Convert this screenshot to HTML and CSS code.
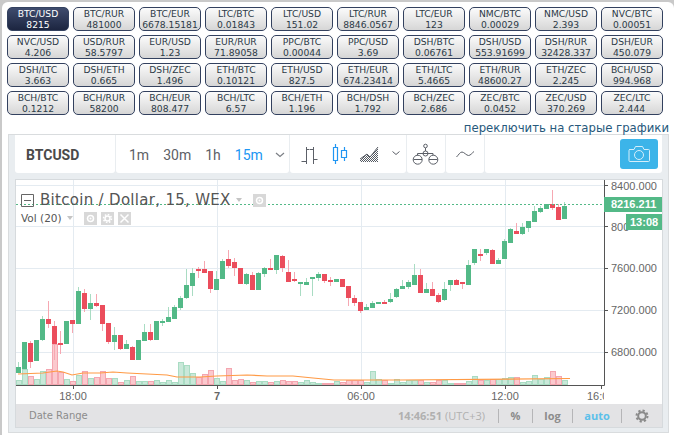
FILE: index.html
```html
<!DOCTYPE html>
<html lang="ru">
<head>
  <meta charset="UTF-8">
  <title>BTCUSD</title>
  <link rel="stylesheet" href="styles.css">
  <script src="chart.js" defer></script>
</head>
<body>
  <div class="page">
    <div class="pairs" id="pairs">
      <a class="pair active"><span>BTC/USD</span><span>8215</span></a>
      <a class="pair"><span>BTC/RUR</span><span>481000</span></a>
      <a class="pair"><span>BTC/EUR</span><span>6678.15181</span></a>
      <a class="pair"><span>LTC/BTC</span><span>0.01843</span></a>
      <a class="pair"><span>LTC/USD</span><span>151.02</span></a>
      <a class="pair"><span>LTC/RUR</span><span>8846.0567</span></a>
      <a class="pair"><span>LTC/EUR</span><span>123</span></a>
      <a class="pair"><span>NMC/BTC</span><span>0.00029</span></a>
      <a class="pair"><span>NMC/USD</span><span>2.393</span></a>
      <a class="pair"><span>NVC/BTC</span><span>0.00051</span></a>
      <a class="pair"><span>NVC/USD</span><span>4.206</span></a>
      <a class="pair"><span>USD/RUR</span><span>58.5797</span></a>
      <a class="pair"><span>EUR/USD</span><span>1.23</span></a>
      <a class="pair"><span>EUR/RUR</span><span>71.89058</span></a>
      <a class="pair"><span>PPC/BTC</span><span>0.00044</span></a>
      <a class="pair"><span>PPC/USD</span><span>3.69</span></a>
      <a class="pair"><span>DSH/BTC</span><span>0.06761</span></a>
      <a class="pair"><span>DSH/USD</span><span>553.91699</span></a>
      <a class="pair"><span>DSH/RUR</span><span>32428.337</span></a>
      <a class="pair"><span>DSH/EUR</span><span>450.079</span></a>
      <a class="pair"><span>DSH/LTC</span><span>3.663</span></a>
      <a class="pair"><span>DSH/ETH</span><span>0.665</span></a>
      <a class="pair"><span>DSH/ZEC</span><span>1.496</span></a>
      <a class="pair"><span>ETH/BTC</span><span>0.10121</span></a>
      <a class="pair"><span>ETH/USD</span><span>827.5</span></a>
      <a class="pair"><span>ETH/EUR</span><span>674.23414</span></a>
      <a class="pair"><span>ETH/LTC</span><span>5.4665</span></a>
      <a class="pair"><span>ETH/RUR</span><span>48600.27</span></a>
      <a class="pair"><span>ETH/ZEC</span><span>2.245</span></a>
      <a class="pair"><span>BCH/USD</span><span>994.968</span></a>
      <a class="pair"><span>BCH/BTC</span><span>0.1212</span></a>
      <a class="pair"><span>BCH/RUR</span><span>58200</span></a>
      <a class="pair"><span>BCH/EUR</span><span>808.477</span></a>
      <a class="pair"><span>BCH/LTC</span><span>6.57</span></a>
      <a class="pair"><span>BCH/ETH</span><span>1.196</span></a>
      <a class="pair"><span>BCH/DSH</span><span>1.792</span></a>
      <a class="pair"><span>BCH/ZEC</span><span>2.686</span></a>
      <a class="pair"><span>ZEC/BTC</span><span>0.0452</span></a>
      <a class="pair"><span>ZEC/USD</span><span>370.269</span></a>
      <a class="pair"><span>ZEC/LTC</span><span>2.444</span></a>
    </div>
    <div class="switch-row"><a class="switch-link">переключить на старые графики</a></div>

    <div class="chart-panel">
      <div class="toolbar">
        <div class="tool-group group-symbol">BTCUSD</div>
        <div class="tool-group group-intervals">
          <span class="interval">1m</span>
          <span class="interval">30m</span>
          <span class="interval">1h</span>
          <span class="interval current">15m</span>
          <svg class="chevron" width="10" height="6" viewBox="0 0 10 6"><path d="M1 1l4 3.5L9 1"/></svg>
        </div>
        <div class="tool-group group-styles">
          <svg width="116" height="38" viewBox="290 135 116 38">
            <defs>
              <pattern id="dots" width="2" height="2" patternUnits="userSpaceOnUse">
                <rect width="1" height="1" fill="#555a62"/>
                <rect x="1" y="1" width="1" height="1" fill="#555a62"/>
              </pattern>
            </defs>
            <path class="ico" d="M301.5 161.5h5.500M306.5 147v17M306.5 149.5h3M313.5 147v17M310 149.5h3.500M313.5 159.5h4"/>
            <path class="ico-blue" d="M335.5 144v3M335.5 160v4M333.5 147.5h4v13h-4zM344.5 147v3M344.5 157v4M341.5 150.5h5v7h-5z"/>
            <path fill="url(#dots)" d="M360 159l7-5 3 3 8-10v15h-18z"/>
            <path class="ico" d="M360 159l7-5 3 3 8-10"/>
            <path class="ico" d="M392.5 151.5l3.500 3 3.500-3"/>
          </svg>
        </div>
        <div class="tool-group group-icon">
          <svg width="38" height="38" viewBox="407 135 38 38">
            <path class="ico" d="M417.5 153.5h15.500M417.500 153.500v2M433 153.500v2M425.500 148v3M413.500 159.500h8.500M429 159.500h8.500"/>
            <circle class="ico" cx="425.5" cy="153.5" r="2.5"/>
            <circle class="ico" cx="425.5" cy="146" r="1.8"/>
            <circle class="ico" cx="417.700" cy="159.700" r="4.500"/>
            <circle class="ico" cx="433.300" cy="159.700" r="4.500"/>
          </svg>
        </div>
        <div class="tool-group group-icon">
          <svg width="38" height="38" viewBox="446 135 38 38">
            <path class="ico" d="M456.5 157c2-2 3.500-5 5.500-5s4.500 3.500 6.500 3.500 3.500-2.500 5.500-4"/>
          </svg>
        </div>
        <div class="tool-group group-camera">
          <span class="camera">
            <svg width="24" height="18" viewBox="0 0 24 18">
              <path d="M2.500 4.500h4.500l1.500-3h7l1.500 3h4.500a1 1 0 0 1 1 1v10a1 1 0 0 1-1 1h-18.500a1 1 0 0 1-1-1v-10a1 1 0 0 1 1-1z"/>
              <circle cx="12" cy="10" r="4.500"/>
            </svg>
          </span>
        </div>
      </div>

      <div class="chart-box">
        <div class="plot">
          <svg class="plot-svg" id="plot" width="646" height="224" viewBox="16 180 646 224"></svg>
          <div class="legend">
            <div class="legend-main">
              <svg class="collapse" width="13" height="13" viewBox="0 0 13 13"><path d="M.5 .5h12v12H.5zM3 6.500h7"/></svg>
              <span class="legend-title">Bitcoin / Dollar, 15, WEX</span>
              <i class="caret"></i>
              <span class="mini-btn first">
                <svg width="13" height="13" viewBox="0 0 13 13"><circle cx="6.500" cy="6.500" r="3"/><circle class="pupil" cx="6.500" cy="6.500" r="1"/></svg>
              </span>
            </div>
            <div class="legend-vol">
              <span class="vol-title">Vol (20)</span>
              <i class="caret"></i>
              <span class="mini-btn first">
                <svg width="13" height="13" viewBox="0 0 13 13"><circle cx="6.500" cy="6.500" r="3"/><circle class="pupil" cx="6.500" cy="6.500" r="1"/></svg>
              </span>
              <span class="mini-btn">
                <svg width="13" height="13" viewBox="0 0 13 13"><circle cx="6.500" cy="6.500" r="2.500"/><circle class="teeth" cx="6.500" cy="6.500" r="4"/></svg>
              </span>
              <span class="mini-btn">
                <svg width="13" height="13" viewBox="0 0 13 13"><path d="M2.500 2.500l8 8M10.500 2.500l-8 8"/></svg>
              </span>
            </div>
          </div>
        </div>
        <div class="status-bar">
          <span class="date-range">Date Range</span>
          <div class="status-right">
            <span class="clock">14:46:51 <span class="utc">(UTC+3)</span></span>
            <span class="status-item item-percent">%</span>
            <span class="status-item item-log">log</span>
            <span class="status-item item-auto">auto</span>
            <span class="status-item item-gear">
              <svg width="14" height="14" viewBox="0 0 14 14"><circle cx="7" cy="7" r="3.800"/><circle class="gear-teeth" cx="7" cy="7" r="5.500"/></svg>
            </span>
          </div>
        </div>
      </div>
    </div>
  </div>
</body>
</html>
```

FILE: styles.css
```css
html, body { margin: 0; padding: 0; }
body {
  height: 435px;
  overflow: hidden;
  background-color: #c9c9c9;
  font-family: "Noto Sans", sans-serif;
}
.page {
  height: 433px;
  margin: 2px 0 0 2px;
  background-color: #ffffff;
  border-radius: 6px 6px 0 0;
}

/* pair buttons */
.pairs {
  display: grid;
  grid-template-columns: repeat(10, 62px);
  grid-auto-rows: 24px;
  gap: 4px;
  padding: 5px 0 0 5px;
}
.pair {
  box-sizing: border-box;
  display: block;
  border: 1px solid #33415f;
  border-radius: 5px;
  background: linear-gradient(#fbfbfb, #d6d6d6);
  color: #2c3a47;
  font-family: "DejaVu Sans", sans-serif;
  font-size: 9.2px;
  line-height: 11px;
  text-align: center;
  white-space: nowrap;
}
.pair span { display: block; height: 11px; }
.pair.active {
  background: linear-gradient(#3f4c6e, #1c2540);
  color: #ffffff;
}
.switch-row {
  height: 19px;
  padding-right: 5px;
  text-align: right;
}
.switch-link {
  color: #27597c;
  font-family: "DejaVu Sans", sans-serif;
  font-size: 11.7px;
  line-height: 17px;
  white-space: nowrap;
}

/* chart panel */
.chart-panel {
  box-sizing: border-box;
  width: 661px;
  height: 299px;
  margin-left: 6px;
  border: 1px solid #d9dcde;
  background-color: #e9edf0;
  padding: 0 7px 0 6px;
}
.toolbar {
  display: flex;
  gap: 1px;
  height: 38px;
  margin-right: -1px;
}
.tool-group {
  display: flex;
  align-items: center;
  background-color: #ffffff;
  border-radius: 0 0 3px 3px;
}
.group-symbol {
  width: 89px;
  padding: 2px 0 0 11px;
  height: 36px;
  color: #4a4a4a;
  font-family: Roboto, sans-serif;
  font-size: 14px;
  font-weight: 700;
}
.group-intervals {
  width: 160px;
  height: 36px;
  padding: 2px 0 0 13px;
  gap: 14px;
  color: #5d6166;
  font-family: Roboto, sans-serif;
  font-size: 14px;
}
.interval.current { color: #2196f3; }
.chevron { margin-left: -2px; }
.chevron path { fill: none; stroke: #7b7f85; stroke-width: 1.2; }
.group-styles { width: 116px; }
.group-icon { width: 38px; }
.group-camera {
  flex: 1;
  justify-content: flex-end;
  padding-right: 4px;
}
.camera {
  display: flex;
  align-items: center;
  justify-content: center;
  width: 38px;
  height: 30px;
  border-radius: 3px;
  background-color: #3cb4e9;
}
.camera svg { fill: none; stroke: #d5eefa; stroke-width: 1; }
.ico { fill: none; stroke: #5c6068; stroke-width: 1; }
.ico-blue { fill: none; stroke: #2196f3; stroke-width: 1.2; }

.chart-box {
  width: 646px;
  margin-top: 6px;
  border: 1px solid #d6dadd;
}
.plot {
  position: relative;
  height: 224px;
  background-color: #ffffff;
}
.plot-svg { display: block; }

.axis { stroke: #555555; stroke-width: 1; fill: none; }
.axis-text { fill: #666666; font-family: "Liberation Sans", sans-serif; font-size: 11px; }
.axis-text.bold { font-weight: 700; }
.last-text { fill: #ffffff; font-family: "Liberation Sans", sans-serif; font-size: 11px; font-weight: 700; }
.last-bg { fill: #53b987; }
.last-line { stroke: #53b987; stroke-width: 1; stroke-dasharray: 2 2; }
.ma { fill: none; stroke: #ff9a45; stroke-width: 1.2; }
.up { fill: #53b987; }
.down { fill: #eb4d5c; }
.wick-up { fill: #a9dcc3; }
.wick-down { fill: #f6a8b2; }
.vol-up { fill: #c9e8d9; stroke: #a9dcc3; stroke-width: 1; }
.vol-down { fill: #fbc9ce; stroke: #f4a6b0; stroke-width: 1; }

/* legend over the chart */
.legend {
  position: absolute;
  left: 5px;
  top: 12px;
  color: #555555;
  font-family: "DejaVu Sans", sans-serif;
}
.legend-main, .legend-vol { display: flex; align-items: center; }
.legend-main { height: 16px; }
.legend-vol { height: 14px; margin-top: 3px; }
.collapse { fill: none; stroke: #666666; stroke-width: 1; }
.legend-title {
  margin-left: 6px;
  font-size: 15px;
  letter-spacing: .3px;
  white-space: nowrap;
}
.vol-title { font-size: 10.5px; white-space: nowrap; }
.caret {
  width: 0;
  height: 0;
  margin-left: 5px;
  border-left: 3.5px solid transparent;
  border-right: 3.5px solid transparent;
  border-top: 4px solid #c4c4c4;
}
.mini-btn {
  display: flex;
  width: 13px;
  height: 13px;
  margin-left: 4px;
  background-color: #d8d8d8;
}
.mini-btn.first { margin-left: 11px; }
.mini-btn svg { fill: none; stroke: #ffffff; stroke-width: 1.5; }
.mini-btn .pupil { fill: #ffffff; stroke: none; }
.mini-btn .teeth { stroke-width: 1.5; stroke-dasharray: 1.6 1.5; }

/* bottom bar */
.status-bar {
  display: flex;
  align-items: center;
  height: 23px;
  padding-left: 13px;
  background-color: #e3e3e5;
  color: #8c8c8c;
  font-family: "Open Sans", sans-serif;
  font-size: 11px;
}
.date-range {
  font-family: "DejaVu Sans", sans-serif;
  font-size: 10px;
  white-space: nowrap;
}
.status-right {
  display: flex;
  align-items: center;
  margin-left: auto;
}
.clock {
  margin-right: 13px;
  color: #b0b0b0;
  font-weight: 700;
  white-space: nowrap;
}
.clock .utc { font-weight: 400; }
.status-item {
  box-sizing: border-box;
  display: flex;
  align-items: center;
  justify-content: center;
  height: 14px;
  border-left: 1px solid #b5b5b7;
  font-weight: 700;
  white-space: nowrap;
}
.item-percent { width: 34px; }
.item-log { width: 40px; }
.item-auto { width: 49px; color: #5bc0ea; }
.item-gear { width: 41px; }
.item-gear svg { fill: none; stroke: #8a8a8a; stroke-width: 2; }
.item-gear .gear-teeth { stroke-width: 2; stroke-dasharray: 2.2 2.1; }
```

FILE: chart.js
```js
// g/r, wick top, body top, body bottom, wick bottom, volume top
const candles = [
  ['g',362,367,373,373,380],['g',342,342,369,369,369],['r',341,343,362,368,376],['g',340,340,361,361,379],
  ['g',316,319,340,341,371],['r',301,319,324,328,369],['r',321,326,344,360,344],['r',331,343,345,354,372],
  ['g',321,321,344,344,379],['r',320,320,324,333,381],['g',287,291,324,324,375],['r',289,293,309,312,371],
  ['g',294,303,309,320,378],['r',294,303,306,307,377],['r',305,305,324,331,371],['r',323,323,342,344,378],
  ['g',327,335,342,350,378],['r',335,335,349,350,382],['g',340,344,349,349,380],['r',346,347,360,360,376],
  ['g',340,340,360,360,381],['g',324,332,341,341,381],['r',324,332,340,341,381],['g',321,321,340,340,380],
  ['g',319,321,323,326,382],['g',307,317,322,322,380],['g',305,307,319,319,382],['g',296,298,308,310,362],
  ['g',269,285,298,299,365],['g',268,273,286,296,373],['r',267,269,270,278,377],['r',261,269,273,273,374],
  ['r',271,271,289,293,370],['g',271,279,290,290,378],['g',259,261,279,279,381],['r',250,259,266,268,368],
  ['r',258,262,268,276,380],['r',268,268,284,284,379],['g',273,274,284,285,380],['r',272,275,290,290,382],
  ['g',272,273,290,290,381],['g',267,268,274,277,381],['r',259,268,270,270,382],['g',255,255,270,274,381],
  ['r',255,256,268,272,380],['r',260,272,282,282,381],['r',272,279,281,282,381],['g',282,282,284,296,382],
  ['g',278,282,285,285,380],['g',277,277,279,296,382],['g',272,274,278,281,383],['r',274,274,281,283,383],
  ['r',277,280,281,286,383],['g',279,279,282,282,381],['r',279,279,287,287,382],['r',286,286,298,306,380],
  ['r',295,298,303,306,380],['r',302,302,311,313,380],['g',304,307,310,310,382],['g',301,303,308,308,371],
  ['g',302,302,304,304,379],['r',300,302,304,304,380],['g',293,299,302,303,383],['g',288,289,297,298,379],
  ['g',280,286,289,289,382],['g',280,282,287,289,380],['g',264,275,285,285,380],['r',269,275,293,293,380],
  ['g',283,289,293,293,382],['r',282,289,296,296,382],['r',293,295,302,303,380],['g',282,289,300,301,380],
  ['g',280,280,285,291,383],['r',279,280,285,285,383],['r',282,282,284,289,383],['g',260,265,285,285,381],
  ['g',249,249,263,265,376],['r',249,254,256,261,380],['g',249,249,253,255,380],['r',249,250,264,264,379],
  ['g',258,260,264,264,379],['g',239,241,259,259,378],['g',228,229,243,243,377],['r',223,231,234,234,377],
  ['g',223,227,234,235,382],['g',221,221,228,232,381],['g',206,211,222,222,375],['g',206,208,212,213,379],
  ['g',204,204,209,209,377],['r',190,204,208,210,371],['r',204,207,220,220,376],['g',202,206,219,219,380]
]

const maLine = 'M18 374 L43 373 L57 371 L63 372 L72 375 L83 373 L100 373 L113 372 L127 373 L167 375 L177 377 L200 377 L217 376 L247 375 L267 376 L293 376 L313 378 L334 380 L400 380 L570 378.500'

// the 8000 tick is cut by the countdown label, only its start shows
const priceLabels = [['8400.000', 190, 185], ['800', 231, 226], ['7600.000', 272, 268], ['7200.000', 314, 310], ['6800.000', 356, 352]]
const timeLabels = [['18:00', 73, ''], ['7', 217, ' bold'], ['06:00', 361, ''], ['12:00', 505, '']]

function buildChart () {
  let s = ''
  // grid
  for (const [, , y] of priceLabels) s += `<rect x="16" y="${y}" width="588" height="1" fill="#e4ebf1"/>`
  for (const [, x] of timeLabels) s += `<rect x="${x}" y="180" width="1" height="205" fill="#e4ebf1"/>`

  // volume
  candles.forEach((c, i) => {
    const x = 16 + 6 * i
    s += `<rect class="${c[0] === 'g' ? 'vol-up' : 'vol-down'}" x="${x + 0.5}" y="${c[5] + 0.5}" width="5" height="${384 - c[5]}"/>`
  })
  s += `<path class="ma" d="${maLine}"/>`

  // candles
  candles.forEach((c, i) => {
    const x = 16 + 6 * i
    const up = c[0] === 'g'
    s += `<rect class="${up ? 'wick-up' : 'wick-down'}" x="${x + 2}" y="${c[1]}" width="1" height="${c[4] - c[1]}"/>`
    s += `<rect class="${up ? 'up' : 'down'}" x="${x}" y="${c[2]}" width="5" height="${Math.max(c[3] - c[2], 2)}"/>`
  })

  // axes
  s += '<path class="axis" d="M604.500 180V385.500H16"/>'
  for (const [t, base, y] of priceLabels) {
    s += `<rect x="604" y="${y}" width="4" height="1" fill="#555555"/>`
    s += `<text class="axis-text" x="611" y="${base}">${t}</text>`
  }
  for (const [t, x, b] of timeLabels) {
    s += `<rect x="${x}" y="385" width="1" height="4" fill="#555555"/>`
    s += `<text class="axis-text${b}" x="${x}" y="400" text-anchor="middle">${t}</text>`
  }
  s += '<rect x="601" y="385" width="1" height="4" fill="#555555"/>'
  s += '<svg x="580" y="385" width="24" height="19" viewBox="580 385 24 19"><text class="axis-text" x="587" y="400">16:00</text></svg>'

  // last price
  s += '<line class="last-line" x1="16" y1="204.500" x2="604" y2="204.500"/>'
  s += '<rect class="last-bg" x="604" y="197" width="58" height="15"/>'
  s += '<text class="last-text" x="611" y="208">8216.211</text>'
  s += '<rect class="last-bg" x="626" y="214" width="36" height="16"/>'
  s += '<text class="last-text" x="630" y="226">13:08</text>'

  document.getElementById('plot').innerHTML = s
}

buildChart()
```
